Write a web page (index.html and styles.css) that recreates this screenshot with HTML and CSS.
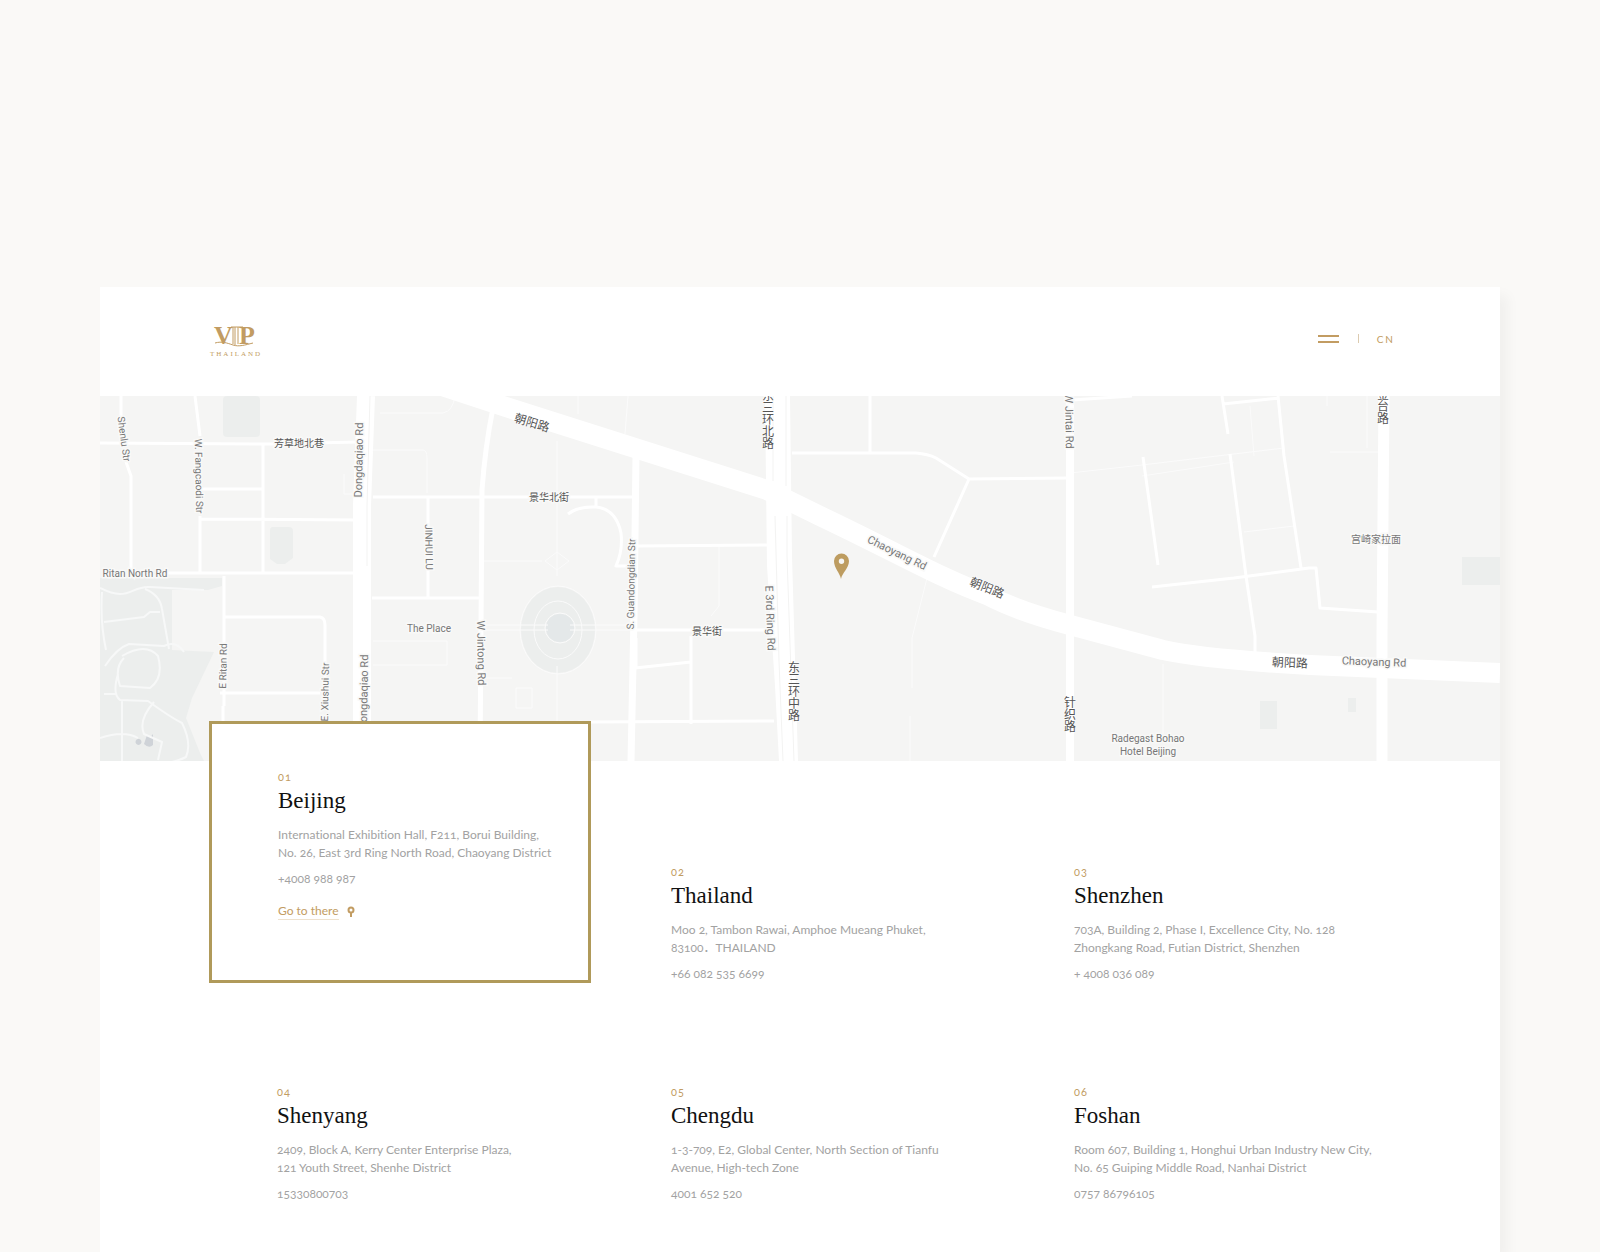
FILE: index.html
```
<!DOCTYPE html>
<html lang="en">
<head>
  <meta charset="UTF-8">
  <meta name="viewport" content="width=device-width, initial-scale=1.0">
  <title>VIP Thailand - Contact</title>
  <link rel="stylesheet" href="styles.css">
</head>
<body>
<div class="sheet">
  <header class="header">
    <a class="logo" href="#" aria-label="VIP Thailand">
      <svg width="56" height="38" viewBox="0 0 56 38">
        <g class="logo-mark">
          <text x="5" y="24">V</text>
          <text x="30" y="24">P</text>
          <path d="M22 7h12M24 7v17M26 7v18M29 7v17"/>
          <path d="M6 23c7-2 12 0 18 2s12 0 20-2"/>
        </g>
        <text class="logo-name" x="1" y="36">THAILAND</text>
      </svg>
    </a>
    <nav class="nav">
      <button class="menu-btn" aria-label="Menu"><span></span><span></span></button>
      <span class="divider"></span>
      <a class="lang" href="#">CN</a>
    </nav>
  </header>

  <div class="map">
    <svg viewBox="0 0 1400 365" preserveAspectRatio="xMidYMid slice" role="img" aria-label="Map of Chaoyang District, Beijing">
      <!-- parks and blocks -->
      <g class="park">
        <path d="M0 182h122v8l-14 4H72v60l42 2-22 46-6 20 14 35 6 12H0z"/>
        <rect x="123" y="0" width="37" height="41" rx="4"/>
        <path d="M170 134q0-3 3-3h16q4 0 4 4v27l-8 6h-8l-7-5z"/>
        <rect x="1362" y="161" width="38" height="28"/>
        <rect x="1160" y="305" width="17" height="28"/>
        <rect x="1248" y="302" width="8" height="14"/>
        <ellipse cx="458" cy="234" rx="37" ry="43"/>
      </g>
      <circle class="plaza" cx="460" cy="232" r="14"/>
      <path class="water" d="M47 339q3 4 6-1v11q-4 4-9-1zM38 343a3 3 0 1 0 1 0z"/>

      <!-- lanes -->
      <g class="lane">
        <path d="M280 17h63q10-2 12-17M273 54h50q4 0 4 8v35M273 269h74v-24h-74M244 78v20h20"/>
        <path d="M478 0v18M528 0l-3 38M457 45v135M457 270v62M382 165h60M380 229h68M380 234h68M470 229h60M470 234h60"/>
        <path d="M445 165l12-9 12 9-12 9zM382 282h30M416 292h16v20h-16zM619 150v60l-8 10"/>
        <path d="M827 182l-15 60v50M810 320v45M1063 268v70M970 77l72-8 142-17M1042 80l92-14M1144 136l50-6M1150 10l4 50M1267 0v52M1230 56h48M1227 0v10"/>
        <circle cx="460" cy="232" r="15"/>
        <ellipse cx="458" cy="234" rx="24" ry="29"/>
        <ellipse cx="458" cy="234" rx="38" ry="44"/>
      </g>
      <g class="lane path">
        <path d="M0 192q12 6 20 6c12 0 16-8 30-7l54 3M45 193q15 6 17 20l7 40M4 226l40-5 6-5h10M2 196q-2 30 4 58"/>
        <path d="M5 270q12-18 24-22l35 2q12-6 20 6M22 260q24-14 36 0 6 22-8 32l-30-2q-6-18 4-28M18 278q-6 20 2 26l28 1q22 16 34 22 10 20 4 34-16 8-34 6M54 306q-16 18-10 32l18 8-4 18M22 304v61M0 342q24-8 38 0M4 298h12"/>
      </g>

      <!-- side streets -->
      <g class="street">
        <path d="M0 47l170 1 88-2M21 0v22M26 66l5 14v97M95 0l5 40M100 120v57M100 93h62M163 48v129M100 123l158 1"/>
        <path d="M60 177h202M124 180v130M124 221h96q5 1 5 8v60M120 297h100M123 310v50"/>
        <path d="M273 101h262M328 101v100M272 202h108M468 118q10-8 28-7 20 2 25 26 2 18-5 33h20M496 102v9"/>
        <path d="M537 150l130-1M535 234h130M591 240v88M535 272l56-6M490 326l184-1M536 242v30"/>
        <path d="M692 57h124q12 1 20 5l33 21-35 78M770 0v57M869 83l100-1M972 4l60-4"/>
        <path d="M1043 61l15 108M1052 191l82-9 75-10h7l4 40 58 4M1122 0l6 38M1123 8l56-6M1130 58l16 122 9 60v20M1178 0l6 60 17 112"/>
      </g>

      <!-- main roads -->
      <g class="road">
        <path class="w5" d="M393 12q-8 40-11 82l-2 271"/>
        <path class="w7" d="M536 60l-2 160-3 145"/>
        <path class="w8" d="M970 0v365"/>
        <path class="w11" d="M1284 0l-2 240v125"/>
        <path class="w18" d="M266 0l-4 110v255"/>
        <path class="w20" d="M330-14l76 25 261 83 53 26c80 38 120 62 167 79q30 16 83 30l93 25q40 9 147 15l190 8"/>
      </g>
      <path class="road-fill" d="M665 0h25l2 160 6 205h-19l-4-75-8-120z"/>
      <path class="kerb" d="M270 0l-3 110v60M673 0v85M675 120l4 145 4 100M686 0v90M687 120v40l7 205"/>

      <!-- street names -->
      <g class="label">
        <text transform="translate(24 43) rotate(82)">Shenlu Str</text>
        <text transform="translate(99 80) rotate(89)">W. Fangcaodi Str</text>
        <text transform="translate(329 151) rotate(89)">JINHUI LU</text>
        <text x="35" y="177">Ritan North Rd</text>
        <text x="329" y="232">The Place</text>
        <text transform="translate(123 270) rotate(-89)">E Ritan Rd</text>
        <text transform="translate(225 296) rotate(-89)">E. Xiushui Str</text>
        <text transform="translate(531 188) rotate(-89)">S. Guandongdian Str</text>
        <text x="1048" y="342">Radegast Bohao</text>
        <text x="1048" y="355">Hotel Beijing</text>
        <text x="1276" y="143">宫崎家拉面</text>
      </g>
      <g class="label label-lg">
        <text transform="translate(259 64) rotate(-89)">Dongdaqiao Rd</text>
        <text transform="translate(264 296) rotate(-89)">Dongdaqiao Rd</text>
        <text transform="translate(381 257) rotate(89)">W Jintong Rd</text>
        <text transform="translate(670 222) rotate(88)">E 3rd Ring Rd</text>
        <text transform="translate(797 157) rotate(26)">Chaoyang Rd</text>
        <text transform="translate(969 25) rotate(89)">W Jintai Rd</text>
        <text transform="translate(1274 266) rotate(2)">Chaoyang Rd</text>
      </g>
      <g class="label label-cn">
        <text x="199" y="47">芳草地北巷</text>
        <text x="449" y="101">景华北街</text>
        <text x="607" y="235">景华街</text>
        <text x="467" y="331">景华南街</text>
      </g>
      <g class="label label-cn label-cn-lg">
        <text transform="translate(432 27) rotate(17)">朝阳路</text>
        <text transform="translate(887 192) rotate(22)">朝阳路</text>
        <text transform="translate(1190 267) rotate(2)">朝阳路</text>
        <text x="668 668 668 668 668" y="0 12 24 36 48">东三环北路</text>
        <text x="694 694 694 694 694" y="272 284 296 308 320">东三环中路</text>
        <text x="970 970 970" y="307 319 331">针织路</text>
        <text x="1283 1283 1283" y="-1 11 23">金台路</text>
      </g>

      <path class="pin" fill-rule="evenodd" d="M741 183c-1-6-7-11-7-18a7.500 7.500 0 0 1 15 0c0 7-7 12-8 18zM741.500 162.500a2.700 2.700 0 1 0 0 5.400 2.700 2.700 0 0 0 0-5.400z"/>
    </svg>
  </div>

  <main class="offices">
    <section class="office active">
      <span class="num">01</span>
      <h2>Beijing</h2>
      <p>International Exhibition Hall, F211, Borui Building,<br>No. 26, East 3rd Ring North Road, Chaoyang District</p>
      <p class="phone">+4008 988 987</p>
      <a class="go" href="#"><span>Go to there</span>
        <svg width="8" height="12" viewBox="0 0 8 12"><circle cx="4" cy="4" r="2.500"/><path d="M4 6v5"/></svg>
      </a>
    </section>
    <section class="office">
      <span class="num">02</span>
      <h2>Thailand</h2>
      <p>Moo 2, Tambon Rawai, Amphoe Mueang Phuket,<br>83100．THAILAND</p>
      <p class="phone">+66 082 535 6699</p>
    </section>
    <section class="office">
      <span class="num">03</span>
      <h2>Shenzhen</h2>
      <p>703A, Building 2, Phase I, Excellence City, No. 128<br>Zhongkang Road, Futian District, Shenzhen</p>
      <p class="phone">+ 4008 036 089</p>
    </section>
    <section class="office">
      <span class="num">04</span>
      <h2>Shenyang</h2>
      <p>2409, Block A, Kerry Center Enterprise Plaza,<br>121 Youth Street, Shenhe District</p>
      <p class="phone">15330800703</p>
    </section>
    <section class="office">
      <span class="num">05</span>
      <h2>Chengdu</h2>
      <p>1-3-709, E2, Global Center, North Section of Tianfu<br>Avenue, High-tech Zone</p>
      <p class="phone">4001 652 520</p>
    </section>
    <section class="office">
      <span class="num">06</span>
      <h2>Foshan</h2>
      <p>Room 607, Building 1, Honghui Urban Industry New City,<br>No. 65 Guiping Middle Road, Nanhai District</p>
      <p class="phone">0757 86796105</p>
    </section>
  </main>
</div>
</body>
</html>
```
FILE: styles.css
```
:root {
  --gold: #c29c62;
  --gold-border: #b09a5a;
  --page: #faf9f7;
  --ground: #f5f5f4;
  --text: #a2a2a2;
}
* {
  box-sizing: border-box;
}
body {
  margin: 0;
  padding-top: 287px;
  background: var(--page);
  color: var(--text);
  font-family: Lato, "Noto Sans CJK SC", sans-serif;
  font-size: 12px;
  font-variant-ligatures: none;
  font-variant-numeric: oldstyle-nums;
  line-height: 18px;
}
a {
  color: var(--gold);
  text-decoration: none;
}
.sheet {
  width: 87.5%;
  margin: 0 auto;
  background: #fff;
  box-shadow: 8px 8px 12px rgba(0, 0, 0, 0.04);
}

/* header */
.header {
  display: flex;
  justify-content: space-between;
  align-items: center;
  height: 109px;
  padding: 0 105px 6px 109px;
}
.logo svg {
  display: block;
}
.logo-mark text {
  font-family: "Liberation Serif", serif;
  font-size: 26px;
  font-weight: 700;
  fill: var(--gold);
}
.logo-mark path {
  fill: none;
  stroke: var(--gold);
}
.logo-name {
  font-family: "Liberation Serif", serif;
  font-size: 7px;
  letter-spacing: 2px;
  fill: var(--gold);
}
.nav {
  display: flex;
  align-items: center;
}
.menu-btn {
  display: flex;
  flex-direction: column;
  gap: 4px;
  width: 21px;
  padding: 0;
  border: none;
  background: none;
  cursor: pointer;
}
.menu-btn span {
  height: 2px;
  background: var(--gold);
}
.divider {
  width: 1px;
  height: 9px;
  margin: 0 18px 0 19px;
  background: #dccbb0;
}
.lang {
  font-size: 10px;
  letter-spacing: 2px;
}

/* map */
.map {
  height: 365px;
  background: var(--ground);
}
.map svg {
  display: block;
  width: 100%;
  height: 100%;
}
.park {
  fill: #eceeed;
}
.plaza {
  fill: #e4e8e9;
}
.water {
  fill: #cfd3d8;
}
.lane, .street, .road {
  fill: none;
  stroke: #fff;
  stroke-linejoin: round;
}
.lane {
  stroke: #fbfbfb;
}
.path {
  stroke-width: 2px;
  stroke: #f7f8f8;
}
.street {
  stroke-width: 3px;
}
.w5 {
  stroke-width: 5px;
}
.w7 {
  stroke-width: 7px;
}
.w8 {
  stroke-width: 8px;
}
.w11 {
  stroke-width: 11px;
}
.w18 {
  stroke-width: 18px;
}
.w20 {
  stroke-width: 20px;
}
.road-fill {
  fill: #fff;
}
.kerb {
  fill: none;
  stroke: #f3f3f2;
}
.label text {
  font-family: Roboto, "Noto Sans CJK SC", sans-serif;
  font-size: 10px;
  font-variant-numeric: normal;
  fill: #777;
  stroke: #f9f9f8;
  stroke-width: 3px;
  paint-order: stroke;
  text-anchor: middle;
  dominant-baseline: central;
}
.label-lg text {
  font-size: 11px;
}
.label-cn text {
  fill: #555;
}
.label-cn-lg text {
  font-size: 12px;
  stroke: #fff;
  stroke-width: 1px;
}
.pin {
  fill: #bd9c60;
}

/* offices */
.offices {
  display: grid;
  grid-template-columns: 394fr 403fr 385fr;
  row-gap: 100px;
  padding: 102px 109px 49px;
}
.office {
  padding-left: 68px;
}
.office.active {
  position: relative;
  margin: -142px 12px 0 0;
  padding: 44px 0 0 66px;
  border: 3px solid var(--gold-border);
  background: #fff;
}
.num {
  display: block;
  color: var(--gold);
  font-size: 11px;
  line-height: 18px;
  letter-spacing: 1px;
}
h2 {
  margin: 1px 0 11px;
  color: #111;
  font-family: "Liberation Serif", serif;
  font-size: 23px;
  font-weight: 400;
  line-height: 28px;
}
p {
  margin: 0;
  white-space: nowrap;
}
.phone {
  margin-top: 8px;
}
.go {
  display: inline-flex;
  align-items: center;
  gap: 8px;
  margin-top: 15px;
}
.go span {
  border-bottom: 1px solid #eee2cf;
  line-height: 16px;
}
.go svg {
  fill: none;
  stroke: var(--gold);
  stroke-width: 2px;
}
```
